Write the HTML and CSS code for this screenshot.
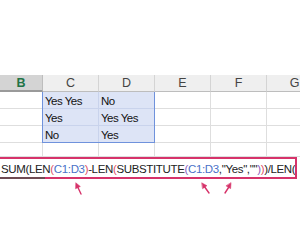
FILE: index.html
```html
<!DOCTYPE html>
<html lang="en">
<head>
    <meta charset="UTF-8">
    <meta name="viewport" content="width=device-width, initial-scale=1.0">
    <title>Count words in range</title>
    <link rel="stylesheet" href="styles.css">
</head>
<body>
    <div class="sheet">
        <div class="top-space"></div>

        <!-- worksheet -->
        <div class="grid-wrap">
            <div class="grid">
                <div class="hd hd-active">B</div>
                <div class="hd">C</div>
                <div class="hd">D</div>
                <div class="hd">E</div>
                <div class="hd">F</div>
                <div class="hd">G</div>
                <div class="hd hd-last"></div>

                <div class="cell"></div>
                <div class="cell sel">Yes Yes</div>
                <div class="cell sel">No</div>
                <div class="cell"></div>
                <div class="cell"></div>
                <div class="cell"></div>
                <div class="cell"></div>

                <div class="cell"></div>
                <div class="cell sel">Yes</div>
                <div class="cell sel">Yes Yes</div>
                <div class="cell"></div>
                <div class="cell"></div>
                <div class="cell"></div>
                <div class="cell"></div>

                <div class="cell"></div>
                <div class="cell sel">No</div>
                <div class="cell sel">Yes</div>
                <div class="cell"></div>
                <div class="cell"></div>
                <div class="cell"></div>
                <div class="cell"></div>

                <div class="cell"></div>
                <div class="cell"></div>
                <div class="cell"></div>
                <div class="cell"></div>
                <div class="cell"></div>
                <div class="cell"></div>
                <div class="cell"></div>
            </div>
            <div class="sel-box"></div>
        </div>

        <!-- formula bar -->
        <div class="formula-bar">
            <div class="formula-text">SUM(LEN<span class="p-red">(</span><span class="ref">C1:D3</span><span class="p-red">)</span>-LEN<span class="p-red">(</span>SUBSTITUTE<span class="p-purple">(</span><span class="ref">C1:D3</span>,"Yes",""<span class="p-purple">)</span><span class="p-red">)</span>)/LEN(</div>
            <div class="cell-mark"></div>
        </div>

        <!-- annotation arrows -->
        <div class="notes">
            <svg width="300" height="72" viewBox="0 0 300 72">
                <g stroke="#d6336a" stroke-width="1.4" fill="#d6336a" stroke-linecap="round">
                    <line x1="81" y1="15" x2="77.5" y2="7.5"/>
                    <polygon points="76,4 80.3,7.5 75.8,9.6" stroke-width="0.6"/>
                    <line x1="209" y1="14" x2="204" y2="7"/>
                    <polygon points="202,4 206.9,6.7 202.8,9.5" stroke-width="0.6"/>
                    <line x1="225" y1="14" x2="229.5" y2="7"/>
                    <polygon points="231,4 230.6,9.6 226.3,7" stroke-width="0.6"/>
                </g>
            </svg>
        </div>
    </div>
</body>
</html>
```
FILE: styles.css
```css
body {
    margin: 0;
    padding: 0;
    background-color: #fff;
    font-family: "Liberation Sans", Arial, sans-serif;
    overflow: hidden;
}
.sheet {
    width: 300px;
    height: 250px;
    overflow: hidden;
}
.top-space {
    height: 75px;
}
.grid-wrap {
    position: relative;
}
.grid {
    display: grid;
    grid-template-columns: 43px 56px 56px 56px 56px 56px 1fr;
    grid-template-rows: 17px 17px 17px 17px 14px;
}
.hd {
    box-sizing: border-box;
    background-color: #efefef;
    border-right: 1px solid #d4d4d4;
    border-bottom: 1px solid #bdbdbd;
    color: #444;
    font-size: 12.5px;
    line-height: 17px;
    text-align: center;
}
.hd-active {
    background-color: #d4d4d4;
    color: #217346;
    font-weight: bold;
    border-right: 1px solid #bdbdbd;
    border-bottom: 2px solid #9a9a9a;
}
.hd-last {
    border-right: none;
}
.cell {
    box-sizing: border-box;
    border-right: 1px solid #dedede;
    border-bottom: 1px solid #dedede;
    color: #111;
    font-size: 11.5px;
    letter-spacing: -0.5px;
    line-height: 16px;
    padding-top: 1px;
    padding-left: 2px;
    white-space: nowrap;
    overflow: hidden;
}
.sel {
    background-color: #dde4f6;
    border-color: #c9d3ec;
}
.sel-box {
    position: absolute;
    left: 42px;
    top: 17px;
    width: 113px;
    height: 51px;
    box-sizing: border-box;
    border: 1px solid #6f92dc;
    border-top: none;
}
.formula-bar {
    position: relative;
    height: 22px;
    box-sizing: border-box;
    margin-left: -3px;
    width: 300px;
    border: 2px solid #d6336a;
    background-color: #fff;
}
.formula-text {
    font-size: 11.5px;
    letter-spacing: -0.35px;
    line-height: 16px;
    padding-top: 2px;
    padding-left: 2px;
    color: #222;
    white-space: nowrap;
    overflow: hidden;
}
.cell-mark {
    position: absolute;
    left: 0;
    bottom: -2px;
    width: 46px;
    height: 2px;
    background-color: #6e4a52;
}
.ref {
    color: #4a72c8;
}
.p-red {
    color: #e0506a;
}
.p-purple {
    color: #8a5cc0;
}
.notes {
    height: 72px;
}
```
